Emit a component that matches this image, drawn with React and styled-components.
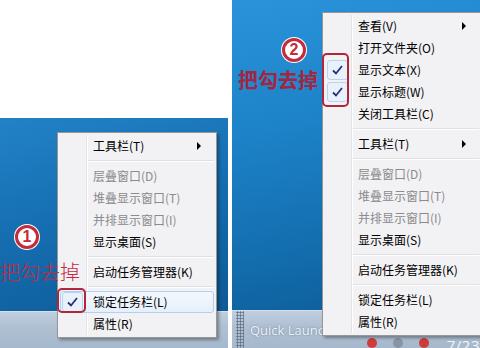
import React from 'react';
import styled, { createGlobalStyle } from 'styled-components';

const GlobalStyle = createGlobalStyle`
  html, body {
    margin: 0;
    padding: 0;
    background: #fff;
  }
  body {
    font-family: "Noto Sans CJK SC", "Noto Sans", sans-serif;
  }
`;

const Page = styled.div`
  width: 480px;
  height: 348px;
  display: flex;
  gap: 4px;
  overflow: hidden;
`;

const Panel = styled.div`
  position: relative;
  flex-shrink: 0;
  width: ${props => props.width}px;
  margin-top: ${props => props.offset}px;
  height: ${props => 348 - props.offset}px;
  display: flex;
  flex-direction: column;
  overflow: hidden;
`;

const Desktop = styled.div`
  flex: 1;
  background: ${props => props.bg};
`;

const Taskbar = styled.div`
  height: ${props => props.height}px;
  flex-shrink: 0;
  display: flex;
  align-items: center;
  background: linear-gradient(180deg, #c0cede 0%, #b0c0d3 40%, #a6b8cc 100%);
  border-top: 1px solid #d6e0ea;
`;

const Grip = styled.div`
  width: 8px;
  height: 100%;
  margin-left: 4px;
  background-image: radial-gradient(circle, #5d6d80 0.9px, transparent 1.2px);
  background-size: 3px 3px;
`;

const QuickLaunch = styled.span`
  margin-left: 6px;
  font-family: "Open Sans", "Noto Sans", sans-serif;
  font-size: 13px;
  color: #eef3f8;
  text-shadow: 0 0 2px rgba(60, 80, 110, 0.6);
  white-space: nowrap;
`;

const Tray = styled.div`
  margin-left: auto;
  align-self: flex-end;
  display: flex;
  align-items: flex-start;
  gap: 16px;
  height: 12px;
  overflow: hidden;
`;

const TrayIcon = styled.span`
  width: 10px;
  height: 10px;
  margin-top: 2px;
  border-radius: 50%;
  background: ${props => props.color};
`;

const Clock = styled.span`
  font-family: "Open Sans", sans-serif;
  font-size: 15px;
  line-height: 15px;
  color: #f2f5fa;
  margin-top: 2px;
  margin-left: 2px;
  letter-spacing: 0.5px;
  white-space: nowrap;
`;

const Menu = styled.div`
  position: absolute;
  z-index: 2;
  left: ${props => props.left}px;
  top: ${props => props.top}px;
  width: 160px;
  box-sizing: border-box;
  padding: 2px;
  background: #f2f1f4;
  border: 1px solid #979797;
  box-shadow: 2px 2px 3px rgba(0, 0, 0, 0.35);
  font-size: 12px;

  &::before {
    content: '';
    position: absolute;
    top: 2px;
    bottom: 2px;
    left: 28px;
    width: 1px;
    background: #e2e2e4;
    border-right: 1px solid #fff;
  }
`;

const Item = styled.div`
  position: relative;
  height: 22px;
  box-sizing: border-box;
  display: flex;
  align-items: center;
  padding-left: 32px;
  padding-right: 12px;
  color: ${props => (props.disabled ? '#8b8b8b' : '#000')};
  white-space: nowrap;
  border: 1px solid ${props => (props.hover ? '#aed0f2' : 'transparent')};
  border-radius: 3px;
  background: ${props =>
    props.hover ? 'linear-gradient(180deg, #f4f8fd 0%, #e6effb 100%)' : 'transparent'};
`;

const Label = styled.span`
  flex: 1;
  line-height: 20px;
`;

const Arrow = styled.span`
  width: 0;
  height: 0;
  border-top: 4px solid transparent;
  border-bottom: 4px solid transparent;
  border-left: 4px solid #000;
`;

const CheckBox = styled.span`
  position: absolute;
  left: 1px;
  top: 0;
  width: 21px;
  height: 20px;
  box-sizing: border-box;
  border: 1px solid #b9d2ef;
  border-radius: 3px;
  background: #e9f1fb;
  display: flex;
  align-items: center;
  justify-content: center;
`;

const Separator = styled.div`
  height: 8px;
  display: flex;
  align-items: center;
  padding-left: 28px;

  &::after {
    content: '';
    flex: 1;
    height: 1px;
    background: #e0e0e2;
    border-bottom: 1px solid #fff;
  }
`;

const Mark = styled.div`
  position: absolute;
  z-index: 3;
  left: ${props => props.left}px;
  top: ${props => props.top}px;
  width: ${props => props.width}px;
  height: ${props => props.height}px;
  box-sizing: border-box;
  border: 2px solid #b3253a;
  border-radius: 5px;
`;

const Badge = styled.div`
  position: absolute;
  z-index: 3;
  left: ${props => props.left}px;
  top: ${props => props.top}px;
  width: 24px;
  height: 24px;
  box-sizing: border-box;
  border: 3px solid #c42b3b;
  border-radius: 50%;
  background: #fff;
  box-shadow: 0 0 0 1px #fff;
  display: flex;
  align-items: center;
  justify-content: center;
  font-family: "Liberation Sans", sans-serif;
  font-weight: 700;
  font-size: 16px;
  color: #c42b3b;
`;

const Note = styled.div`
  position: absolute;
  z-index: 3;
  left: ${props => props.left}px;
  top: ${props => props.top}px;
  font-family: "Noto Sans CJK SC", sans-serif;
  font-size: 20px;
  line-height: 24px;
  font-weight: ${props => (props.bold ? 700 : 300)};
  color: ${props => (props.bold ? '#a3253f' : '#c62a3c')};
  white-space: nowrap;
`;

const Check = () => (
  <svg width="11" height="10" viewBox="0 0 11 10">
    <path d="M1 5.5 L4 8.5 L10 1" fill="none" stroke="#23307d" strokeWidth="1.8" />
  </svg>
);

const lowerItems = [
  { label: '工具栏(T)', sub: true },
  { sep: true },
  { label: '层叠窗口(D)', disabled: true },
  { label: '堆叠显示窗口(T)', disabled: true },
  { label: '并排显示窗口(I)', disabled: true },
  { label: '显示桌面(S)' },
  { sep: true },
  { label: '启动任务管理器(K)' },
  { sep: true },
  { label: '锁定任务栏(L)', checked: true },
  { label: '属性(R)' },
];

const leftItems = lowerItems.map(item =>
  item.checked ? { ...item, hover: true } : item
);

const rightItems = [
  { label: '查看(V)', sub: true },
  { label: '打开文件夹(O)' },
  { label: '显示文本(X)', checked: true },
  { label: '显示标题(W)', checked: true },
  { label: '关闭工具栏(C)' },
  { sep: true },
  ...lowerItems.map(item => (item.checked ? { ...item, checked: false } : item)),
];

const ContextMenu = ({ items, left, top }) => (
  <Menu left={left} top={top}>
    {items.map((item, i) =>
      item.sep ? (
        <Separator key={i} />
      ) : (
        <Item key={i} disabled={item.disabled} hover={item.hover}>
          {item.checked && (
            <CheckBox>
              <Check />
            </CheckBox>
          )}
          <Label>{item.label}</Label>
          {item.sub && <Arrow />}
        </Item>
      )
    )}
  </Menu>
);

export default function App() {
  return (
    <>
      <GlobalStyle />
      <Page>
        <Panel width={228} offset={118}>
          <Desktop bg="linear-gradient(165deg, #2282c6 0%, #166fb2 45%, #0d5a96 100%)" />
          <Taskbar height={36} />
          <ContextMenu items={leftItems} left={57} top={14} />
          <Mark left={57} top={170} width={29} height={25} />
          <Badge left={15} top={107}>1</Badge>
          <Note left={0} top={142}>把勾去掉</Note>
        </Panel>

        <Panel width={248} offset={0}>
          <Desktop bg="linear-gradient(168deg, #2a93d9 0%, #1e84ca 35%, #146fb0 70%, #0c5b96 100%)" />
          <Taskbar height={37}>
            <Grip />
            <QuickLaunch>Quick Launch</QuickLaunch>
            <Tray>
              <TrayIcon color="#d03b3b" />
              <TrayIcon color="#8795a6" />
              <TrayIcon color="#d03b3b" />
              <Clock>7/23</Clock>
            </Tray>
          </Taskbar>
          <ContextMenu items={rightItems} left={90} top={12} />
          <Mark left={90} top={53} width={27} height={54} />
          <Badge left={50} top={38}>2</Badge>
          <Note left={6} top={68} bold>把勾去掉</Note>
        </Panel>
      </Page>
    </>
  );
}
